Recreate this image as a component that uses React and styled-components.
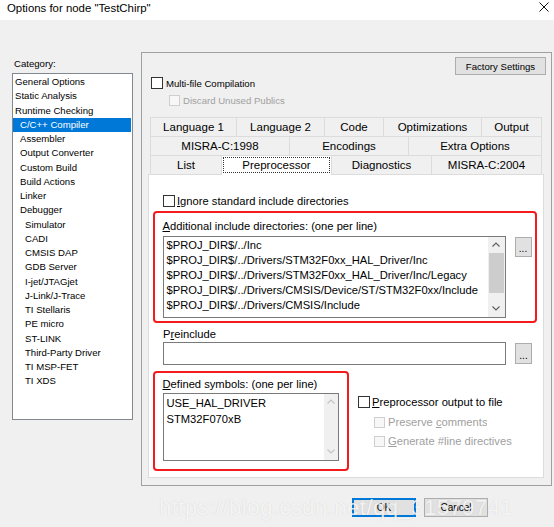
import React from 'react'
import styled, { createGlobalStyle } from 'styled-components'

const GlobalStyle = createGlobalStyle`
  html, body {
    margin: 0;
    padding: 0;
    background: #f0f0f0;
  }
  body {
    font-family: 'Liberation Sans', Arial, sans-serif;
    color: #000;
  }
`

const Window = styled.div`
  position: relative;
  width: 554px;
  height: 527px;
  background: #f0f0f0;
  overflow: hidden;
  display: flex;
  flex-direction: column;
`

const TitleBar = styled.div`
  height: 20px;
  flex: none;
  background: #fff;
  display: flex;
  align-items: flex-start;
  justify-content: space-between;
  padding: 1px 5px 0 7px;
  box-sizing: border-box;
`

const Title = styled.span`
  font-size: 11.4px;
  line-height: 14px;
`

const CloseIcon = styled.svg`
  margin-top: 1px;
`

const Body = styled.div`
  display: flex;
  align-items: flex-start;
  padding: 32px 0 0 12px;
`

const Sidebar = styled.div`
  width: 121px;
  padding-top: 2px;
`

const SmallLabel = styled.div`
  font-size: 9.6px;
  line-height: 19px;
  padding-left: 2px;
`

const CategoryList = styled.ul`
  margin: 0;
  padding: 1px 1px 0 0;
  list-style: none;
  height: 347px;
  box-sizing: border-box;
  border: 1px solid #828790;
  background: #fff;
`

const CategoryItem = styled.li`
  height: 14.25px;
  line-height: 14.25px;
  font-size: 9.6px;
  white-space: nowrap;
  padding-left: ${(p) => 2 + p.$level * 5}px;
  background: ${(p) => (p.$selected ? '#0078d7' : 'transparent')};
  color: ${(p) => (p.$selected ? '#fff' : '#000')};
`

const Group = styled.div`
  margin-left: 8px;
  width: 411px;
  height: 434px;
  box-sizing: border-box;
  border: 1px solid #a0a0a0;
  display: flex;
  flex-direction: column;
`

const TopBar = styled.div`
  display: flex;
  justify-content: flex-end;
  padding: 4px 5px 0 0;
`

const WinButton = styled.button`
  width: ${(p) => p.$w}px;
  height: ${(p) => p.$h}px;
  box-sizing: border-box;
  padding: 0;
  margin: 0;
  background: #e1e1e1;
  border: 1px solid ${(p) => (p.$default ? '#0078d7' : '#adadad')};
  box-shadow: ${(p) => (p.$default ? 'inset 0 0 0 1px #0078d7' : 'none')};
  font-family: 'Liberation Sans', Arial, sans-serif;
  font-size: ${(p) => p.$fs || 9.6}px;
  color: #000;
  display: flex;
  align-items: center;
  justify-content: center;
  flex: none;
`

const CheckRow = styled.label`
  display: flex;
  align-items: center;
  height: 12px;
  margin-top: ${(p) => p.$mt || 0}px;
  padding-left: ${(p) => p.$pl || 0}px;
  font-size: ${(p) => p.$fs || 11.2}px;
  color: ${(p) => (p.$disabled ? '#a0a0a0' : '#000')};
  white-space: nowrap;
`

const CheckBox = styled.span`
  width: ${(p) => p.$size}px;
  height: ${(p) => p.$size}px;
  box-sizing: border-box;
  flex: none;
  background: ${(p) => (p.$disabled ? '#f7f7f7' : '#fff')};
  border: 1px solid ${(p) => (p.$disabled ? '#cfcfcf' : '#333')};
  margin-right: ${(p) => p.$gap}px;
`

const CheckText = styled.span`
  max-width: ${(p) => p.$max || 400}px;
  overflow: hidden;
`

const TabArea = styled.div`
  margin-top: 11px;
  padding: 0 7px 0 6px;
`

const TabRow = styled.div`
  display: flex;
  height: 19px;
  margin: 0 2px;
`

const Tab = styled.div`
  position: relative;
  width: ${(p) => p.$w}px;
  box-sizing: border-box;
  border-top: 1px solid #dcdcdc;
  border-left: ${(p) => (p.$first ? '1px solid #dcdcdc' : 'none')};
  border-right: 1px solid #dcdcdc;
  background: ${(p) => (p.$active ? '#fff' : '#f0f0f0')};
  font-size: 11.5px;
  line-height: 18px;
  text-align: center;
  white-space: nowrap;
  z-index: ${(p) => (p.$active ? 1 : 0)};
  height: ${(p) => (p.$active ? '20px' : '19px')};

  &::after {
    content: '';
    display: ${(p) => (p.$active ? 'block' : 'none')};
    position: absolute;
    left: 1px;
    right: 1px;
    top: 1px;
    bottom: 2px;
    border: 1px dotted #333;
  }
`

const TabPanel = styled.div`
  height: 304px;
  box-sizing: border-box;
  border: 1px solid #dcdcdc;
  background: #fff;
  padding: 20px 6px 0 4px;
  display: flex;
  flex-direction: column;
`

const RedBox = styled.div`
  border: 2.5px solid #f31b1b;
  border-radius: 4px;
  box-sizing: border-box;
  width: ${(p) => (p.$w ? `${p.$w}px` : 'auto')};
  height: ${(p) => (p.$h ? `${p.$h}px` : 'auto')};
  padding: ${(p) => p.$pad};
  margin-top: ${(p) => p.$mt || 0}px;
  flex: none;
`

const FieldLabel = styled.div`
  font-size: 11.2px;
  line-height: 16px;
  margin-top: ${(p) => p.$mt || 0}px;
  margin-bottom: ${(p) => p.$mb || 0}px;
  padding-left: ${(p) => p.$pl || 0}px;
`

const EditRow = styled.div`
  display: flex;
  align-items: flex-start;
  gap: 9px;
  padding-left: ${(p) => p.$pl || 0}px;
`

const EditBox = styled.div`
  width: ${(p) => p.$w}px;
  height: ${(p) => p.$h}px;
  box-sizing: border-box;
  border: 1px solid #7a7a7a;
  background: #fff;
  display: flex;
  flex: none;
`

const Lines = styled.div`
  flex: 1;
  padding: ${(p) => p.$pt}px 0 0 3px;
  font-size: 11.2px;
  line-height: ${(p) => p.$lh}px;
  white-space: nowrap;
  overflow: hidden;
`

const ScrollBar = styled.div`
  width: ${(p) => p.$w}px;
  flex: none;
  background: #f0f0f0;
  display: flex;
  flex-direction: column;
`

const ScrollArrow = styled.div`
  height: 16px;
  flex: none;
  display: flex;
  align-items: center;
  justify-content: center;
`

const ScrollTrack = styled.div`
  flex: 1;
`

const ScrollThumb = styled.div`
  height: 40px;
  margin: 0 1px;
  background: #cdcdcd;
`

const BrowseButton = styled(WinButton)`
  margin-top: 1px;
  align-items: flex-end;
  padding-bottom: 4px;
  font-size: 10px;
  line-height: 6px;
`

const BottomRow = styled.div`
  display: flex;
  align-items: flex-start;
  margin-top: 6px;
`

const OptionColumn = styled.div`
  margin-left: 9px;
  padding-top: 25px;
  display: flex;
  flex-direction: column;
`

const Footer = styled.div`
  display: flex;
  justify-content: flex-end;
  gap: 8px;
  padding: 12px 66px 0 0;
`

const Watermark = styled.div`
  position: absolute;
  left: 159px;
  top: 495px;
  font-family: 'Liberation Sans', Arial, sans-serif;
  font-size: 22px;
  letter-spacing: 0.5px;
  color: rgba(255, 255, 255, 0.78);
  text-shadow: 0 0 1px rgba(150, 150, 150, 0.4);
  pointer-events: none;
  white-space: nowrap;
`

const categories = [
  ['General Options', 0],
  ['Static Analysis', 0],
  ['Runtime Checking', 0],
  ['C/C++ Compiler', 1, true],
  ['Assembler', 1],
  ['Output Converter', 1],
  ['Custom Build', 1],
  ['Build Actions', 1],
  ['Linker', 1],
  ['Debugger', 1],
  ['Simulator', 2],
  ['CADI', 2],
  ['CMSIS DAP', 2],
  ['GDB Server', 2],
  ['I-jet/JTAGjet', 2],
  ['J-Link/J-Trace', 2],
  ['TI Stellaris', 2],
  ['PE micro', 2],
  ['ST-LINK', 2],
  ['Third-Party Driver', 2],
  ['TI MSP-FET', 2],
  ['TI XDS', 2],
]

const tabRows = [
  [['Language 1', 87], ['Language 2', 88], ['Code', 59], ['Optimizations', 98], ['Output', 60]],
  [['MISRA-C:1998', 140], ['Encodings', 119], ['Extra Options', 133]],
  [['List', 72], ['Preprocessor', 110, true], ['Diagnostics', 100], ['MISRA-C:2004', 110]],
]

const includeDirs = [
  '$PROJ_DIR$/../Inc',
  '$PROJ_DIR$/../Drivers/STM32F0xx_HAL_Driver/Inc',
  '$PROJ_DIR$/../Drivers/STM32F0xx_HAL_Driver/Inc/Legacy',
  '$PROJ_DIR$/../Drivers/CMSIS/Device/ST/STM32F0xx/Include',
  '$PROJ_DIR$/../Drivers/CMSIS/Include',
]

const Chevron = ({ up, color }) => (
  <svg width="8" height="5" viewBox="0 0 8 5">
    <path
      d={up ? 'M0.5 4.5 L4 1 L7.5 4.5' : 'M0.5 0.5 L4 4 L7.5 0.5'}
      fill="none"
      stroke={color}
      strokeWidth="1.2"
    />
  </svg>
)

const Check = ({ size = 12, gap = 3, disabled, children, ...rest }) => (
  <CheckRow $disabled={disabled} {...rest}>
    <CheckBox $size={size} $gap={gap} $disabled={disabled} />
    {children}
  </CheckRow>
)

const App = () => {
  return (
    <Window>
      <GlobalStyle />
      <TitleBar>
        <Title>Options for node "TestChirp"</Title>
        <CloseIcon width="10" height="10" viewBox="0 0 10 10">
          <path d="M0.5 0.5 L9.5 9.5 M9.5 0.5 L0.5 9.5" stroke="#111" strokeWidth="1" />
        </CloseIcon>
      </TitleBar>

      <Body>
        <Sidebar>
          <SmallLabel>Category:</SmallLabel>
          <CategoryList>
            {categories.map(([name, level, selected]) => (
              <CategoryItem key={name} $level={level} $selected={selected}>
                {name}
              </CategoryItem>
            ))}
          </CategoryList>
        </Sidebar>

        <Group>
          <TopBar>
            <WinButton $w={91} $h={18}>Factory Settings</WinButton>
          </TopBar>
          <Check $mt={2} $pl={9} $fs={9.6}>
            <CheckText>Multi-file Compilation</CheckText>
          </Check>
          <Check $mt={5} $pl={27} $fs={9.6} size={11} disabled>
            <CheckText>Discard Unused Publics</CheckText>
          </Check>

          <TabArea>
            {tabRows.map((row, i) => (
              <TabRow key={i}>
                {row.map(([label, w, active], j) => (
                  <Tab key={label} $w={w} $first={j === 0} $active={active}>
                    {label}
                  </Tab>
                ))}
              </TabRow>
            ))}

            <TabPanel>
              <Check $pl={10} gap={2}>
                <CheckText $max={181}>
                  <u>I</u>gnore standard include directories
                </CheckText>
              </Check>

              <RedBox $pad="5px 0 3.5px 7.5px" $mt={4}>
                <FieldLabel $mb={1.5}>
                  <u>A</u>dditional include directories: (one per line)
                </FieldLabel>
                <EditRow>
                  <EditBox $w={343} $h={82}>
                    <Lines $pt={1.5} $lh={15}>
                      {includeDirs.map((d) => (
                        <div key={d}>{d}</div>
                      ))}
                    </Lines>
                    <ScrollBar $w={17}>
                      <ScrollArrow>
                        <Chevron up color="#606060" />
                      </ScrollArrow>
                      <ScrollTrack>
                        <ScrollThumb />
                      </ScrollTrack>
                      <ScrollArrow>
                        <Chevron color="#606060" />
                      </ScrollArrow>
                    </ScrollBar>
                  </EditBox>
                  <BrowseButton $w={17} $h={20}>...</BrowseButton>
                </EditRow>
              </RedBox>

              <FieldLabel $mt={3} $pl={10}>
                P<u>r</u>einclude
              </FieldLabel>
              <EditRow $pl={10}>
                <EditBox $w={343} $h={23} />
                <BrowseButton $w={17} $h={21}>...</BrowseButton>
              </EditRow>

              <BottomRow>
                <RedBox $w={196} $h={100} $pad="2.5px 0 0 7.5px">
                  <FieldLabel $mb={1}>
                    <u>D</u>efined symbols: (one per line)
                  </FieldLabel>
                  <EditBox $w={176} $h={68}>
                    <Lines $pt={1} $lh={16}>
                      <div>USE_HAL_DRIVER</div>
                      <div>STM32F070xB</div>
                    </Lines>
                    <ScrollBar $w={14}>
                      <ScrollArrow>
                        <Chevron up color="#c4c4c4" />
                      </ScrollArrow>
                      <ScrollTrack />
                      <ScrollArrow>
                        <Chevron color="#c4c4c4" />
                      </ScrollArrow>
                    </ScrollBar>
                  </EditBox>
                </RedBox>

                <OptionColumn>
                  <Check gap={2}>
                    <CheckText>
                      <u>P</u>reprocessor output to file
                    </CheckText>
                  </Check>
                  <Check $mt={8} $pl={16} size={11} disabled>
                    <CheckText>
                      Preserve <u>c</u>omments
                    </CheckText>
                  </Check>
                  <Check $mt={7} $pl={16} size={11} disabled>
                    <CheckText>
                      <u>G</u>enerate #line directives
                    </CheckText>
                  </Check>
                </OptionColumn>
              </BottomRow>
            </TabPanel>
          </TabArea>
        </Group>
      </Body>

      <Footer>
        <WinButton $w={64} $h={19} $default $fs={10}>OK</WinButton>
        <WinButton $w={64} $h={19} $fs={10}>Cancel</WinButton>
      </Footer>

      <Watermark>https://blog.csdn.net/qq_31579741</Watermark>
    </Window>
  )
}

export default App
